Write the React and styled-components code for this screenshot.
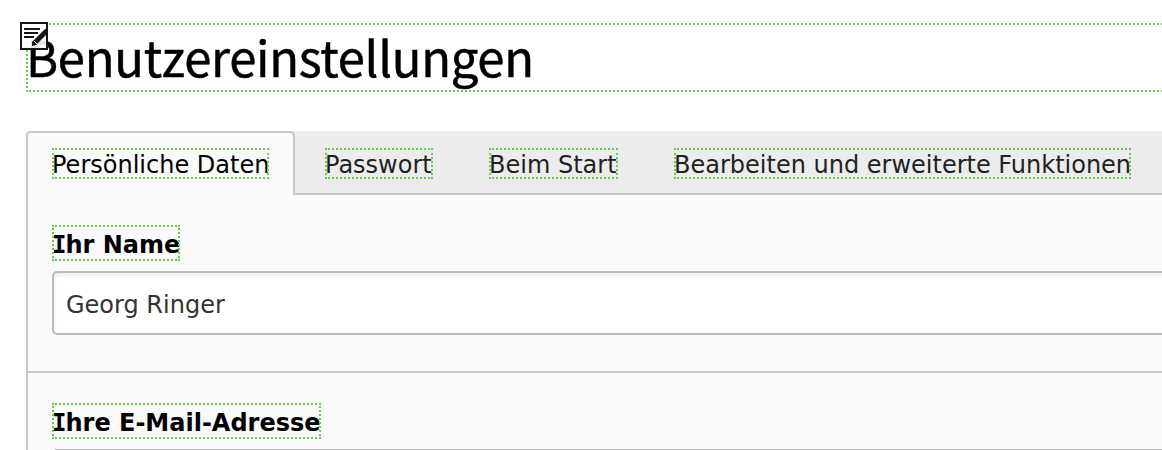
import React from "react";
import styled, { createGlobalStyle } from "styled-components";

const GlobalStyle = createGlobalStyle`
  * { box-sizing: border-box; }
  html, body { margin: 0; background: #fff; overflow: hidden; }
  body { font-family: Verdana, "DejaVu Sans", sans-serif; font-size: 24px; color: #000; }
`;

const Page = styled.main`
  width: 1162px;
  height: 450px;
  overflow: hidden;
  padding: 23px 0 0 26px;
`;

const Title = styled.h1`
  position: relative;
  width: 1180px;
  height: 69px;
  margin: 0 0 39px;
  outline: 2px dotted #68cb49;
  outline-offset: -2px;
  font: 400 49px/66px "Noto Sans CJK SC", sans-serif;
  letter-spacing: -0.32px;
  -webkit-text-stroke: 0.5px #000;
  white-space: nowrap;
`;

const EditBadge = styled.span`
  position: absolute;
  left: -6px;
  top: -1px;
  width: 28px;
  height: 28px;
  background: rgba(255, 255, 255, 0.9);

  svg { display: block; }
`;

const TabBar = styled.nav`
  display: flex;
  width: 1180px;
  height: 64px;
  background: #ececec;
  box-shadow: inset 0 -2px #c8c8c8;
`;

const Tab = styled.div`
  height: 64px;
  flex: none;
  padding: 17px 28px 0;
  color: #1f2223;

  ${(p) => p.$active && `
    color: #000;
    width: 269px;
    margin-right: 2px;
    padding: 15px 24px 0;
    background: linear-gradient(#fafafa, #fafafa) padding-box, #fff;
    border: 2px solid #c8c8c8;
    border-bottom: 0;
    border-radius: 5px 5px 0 0;
  `}
`;

const Marked = styled.span`
  display: block;
  width: ${(p) => p.$width}px;
  height: ${(p) => (p.$label ? 36 : 31)}px;
  line-height: ${(p) => (p.$label ? 40 : 34)}px;
  outline: 2px dotted #68cb49;
  outline-offset: -2px;
  white-space: nowrap;
`;

const Panel = styled.section`
  width: 1180px;
  border-left: 2px solid #c8c8c8;
  background: #fafafa;
`;

const Field = styled.div`
  height: 178px;
  padding: 30px 24px 0;
  border-bottom: 2px solid #c8c8c8;
`;

const Label = styled.label`
  display: block;
  margin-bottom: 10px;
  font-weight: 700;
`;

const SlabCap = styled.span`
  font-family: "DejaVu Sans Mono", monospace;
  letter-spacing: -1px;
`;

const Input = styled.input`
  display: block;
  width: 1140px;
  height: 64px;
  padding: 4px 12px 0;
  border: 2px solid #bbb;
  border-radius: 5px;
  background: #fff;
  box-shadow: inset 0 2px 4px rgba(0, 0, 0, 0.1);
  color: #333;
  font: inherit;
  outline: 0;
`;

function EditIcon() {
  return (
    <svg width="28" height="28" viewBox="0 0 28 28">
      <path d="M1 1H27V27H1Z" fill="none" stroke="#17171a" strokeWidth="2" />
      <path d="M4 7H20M4 11H18M4 15H14" stroke="#17171a" strokeWidth="2" />
      <path d="M12 24V20L24 8L27 6V12L16 23Z" fill="#17171a" />
      <path d="M14 19L17 22" stroke="#fff" strokeWidth="1" />
    </svg>
  );
}

const tabs = [
  { text: "Persönliche Daten", width: 217, active: true },
  { text: "Passwort", width: 108 },
  { text: "Beim Start", width: 129 },
  { text: "Bearbeiten und erweiterte Funktionen", width: 457 },
];

const fields = [
  { rest: "hr Name", width: 128, value: "Georg Ringer" },
  { rest: "hre E-Mail-Adresse", width: 269, value: "" },
];

export default function App() {
  return (
    <>
      <GlobalStyle />
      <Page>
        <Title>
          Benutzereinstellungen
          <EditBadge><EditIcon /></EditBadge>
        </Title>
        <TabBar>
          {tabs.map((t) => (
            <Tab key={t.text} $active={t.active}>
              <Marked $width={t.width}>{t.text}</Marked>
            </Tab>
          ))}
        </TabBar>
        <Panel>
          {fields.map((f) => (
            <Field key={f.rest}>
              <Label>
                <Marked $width={f.width} $label>
                  <SlabCap>I</SlabCap>{f.rest}
                </Marked>
              </Label>
              <Input defaultValue={f.value} />
            </Field>
          ))}
        </Panel>
      </Page>
    </>
  );
}
